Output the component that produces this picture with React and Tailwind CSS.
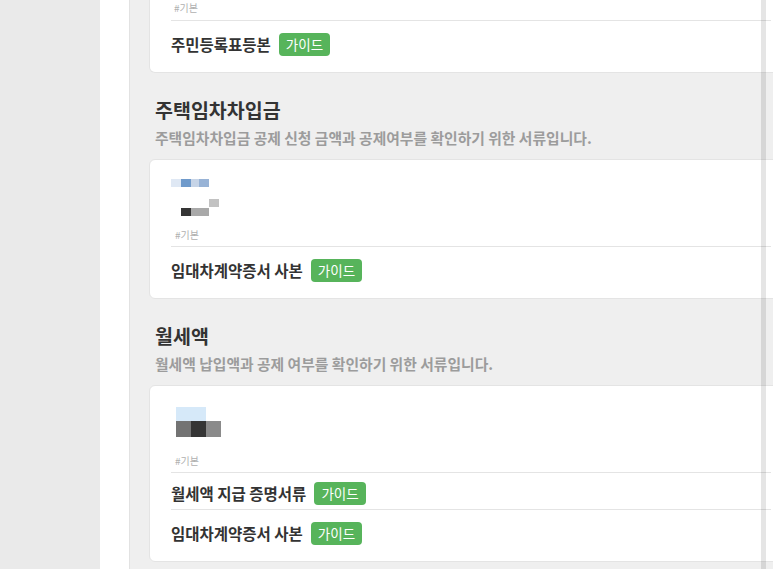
import React from "react";

const FONT = { fontFamily: '"Noto Sans CJK KR", "Noto Sans", sans-serif' };

const GuideBadge = () => (
  <span className="ml-[8px] inline-flex h-[23px] items-center rounded-[4px] bg-[#57b45b] px-[7px] text-[13.5px] font-normal leading-none text-white">
    가이드
  </span>
);

const DocRow = ({ name, className = "" }) => (
  <div className={`flex items-center border-t border-[#e4e4e4] ${className}`}>
    <span className="text-[15.5px] font-bold leading-[23px] text-[#333]">{name}</span>
    <GuideBadge />
  </div>
);

const Tag = ({ className = "" }) => (
  <div className={`text-[10px] leading-[14px] text-[#b0b0b0] ${className}`}>#기본</div>
);

// pixelated thumbnails in the screenshot
const ThumbA = () => (
  <svg width="60" height="50" className="block">
    <rect x="0" y="4" width="10" height="8" fill="#dfe8f4" />
    <rect x="10" y="4" width="10" height="8" fill="#6f9acb" />
    <rect x="20" y="4" width="8" height="8" fill="#c6d4e7" />
    <rect x="28" y="4" width="10" height="8" fill="#98b3d6" />
    <rect x="38" y="24" width="10" height="8" fill="#c2c2c2" />
    <rect x="10" y="33" width="10" height="8" fill="#353535" />
    <rect x="20" y="33" width="18" height="8" fill="#a9a9a9" />
  </svg>
);

const ThumbB = () => (
  <svg width="60" height="50" className="block">
    <rect x="5" y="6" width="30" height="14" fill="#d6e9f9" />
    <rect x="5" y="20" width="15" height="16" fill="#737373" />
    <rect x="20" y="20" width="15" height="16" fill="#353535" />
    <rect x="35" y="20" width="15" height="16" fill="#8a8a8a" />
  </svg>
);

const SectionHead = ({ title, desc }) => (
  <div className="pl-[25px] pt-[25px]">
    <h2 className="text-[19.5px] font-bold leading-[24px] text-[#333]">{title}</h2>
    <p className="mt-[6px] text-[14.8px] font-semibold leading-[20px] text-[#9c9c9c]">{desc}</p>
  </div>
);

export default function App() {
  return (
    <div className="relative flex h-[569px] w-[773px] overflow-hidden bg-[#eaeaea]" style={FONT}>
      <div className="w-[100px] shrink-0 bg-[#eaeaea]" />
      <div className="w-[30px] shrink-0 border-r border-[#e2e2e2] bg-white" />
      <main className="min-w-0 flex-1 overflow-hidden bg-[#efefef] pl-[19px]">
        {/* 기본 서류 */}
        <div className="mr-[-20px] rounded-b-[6px] border border-t-0 border-[#e4e4e4] bg-white px-[21px] pb-[16px]">
          <Tag className="pt-[1px] pl-[3px]" />
          <div className="h-[5px]" />
          <DocRow name="주민등록표등본" className="pt-[12px]" />
        </div>

        <div className="-ml-[19px]">
          <SectionHead
            title="주택임차차입금"
            desc="주택임차차입금 공제 신청 금액과 공제여부를 확인하기 위한 서류입니다."
          />
        </div>
        <div className="mt-[11px] mr-[-20px] rounded-[6px] border border-[#e4e4e4] bg-white px-[21px] pt-[15px] pb-[16px]">
          <ThumbA />
          <Tag className="mt-[3px] pl-[4px]" />
          <div className="h-[4px]" />
          <DocRow name="임대차계약증서 사본" className="pt-[12px]" />
        </div>

        <div className="-ml-[19px]">
          <SectionHead title="월세액" desc="월세액 납입액과 공제 여부를 확인하기 위한 서류입니다." />
        </div>
        <div className="mt-[11px] mr-[-20px] rounded-[6px] border border-[#e4e4e4] bg-white px-[21px] pt-[15px] pb-[16px]">
          <ThumbB />
          <Tag className="mt-[3px] pl-[4px]" />
          <div className="h-[4px]" />
          <DocRow name="월세액 지급 증명서류" className="pt-[9px] pb-[4px]" />
          <DocRow name="임대차계약증서 사본" className="pt-[12px]" />
        </div>
      </main>
      <div className="absolute top-0 left-[761px] h-full w-[5px] bg-black/[0.1]" />
    </div>
  );
}
